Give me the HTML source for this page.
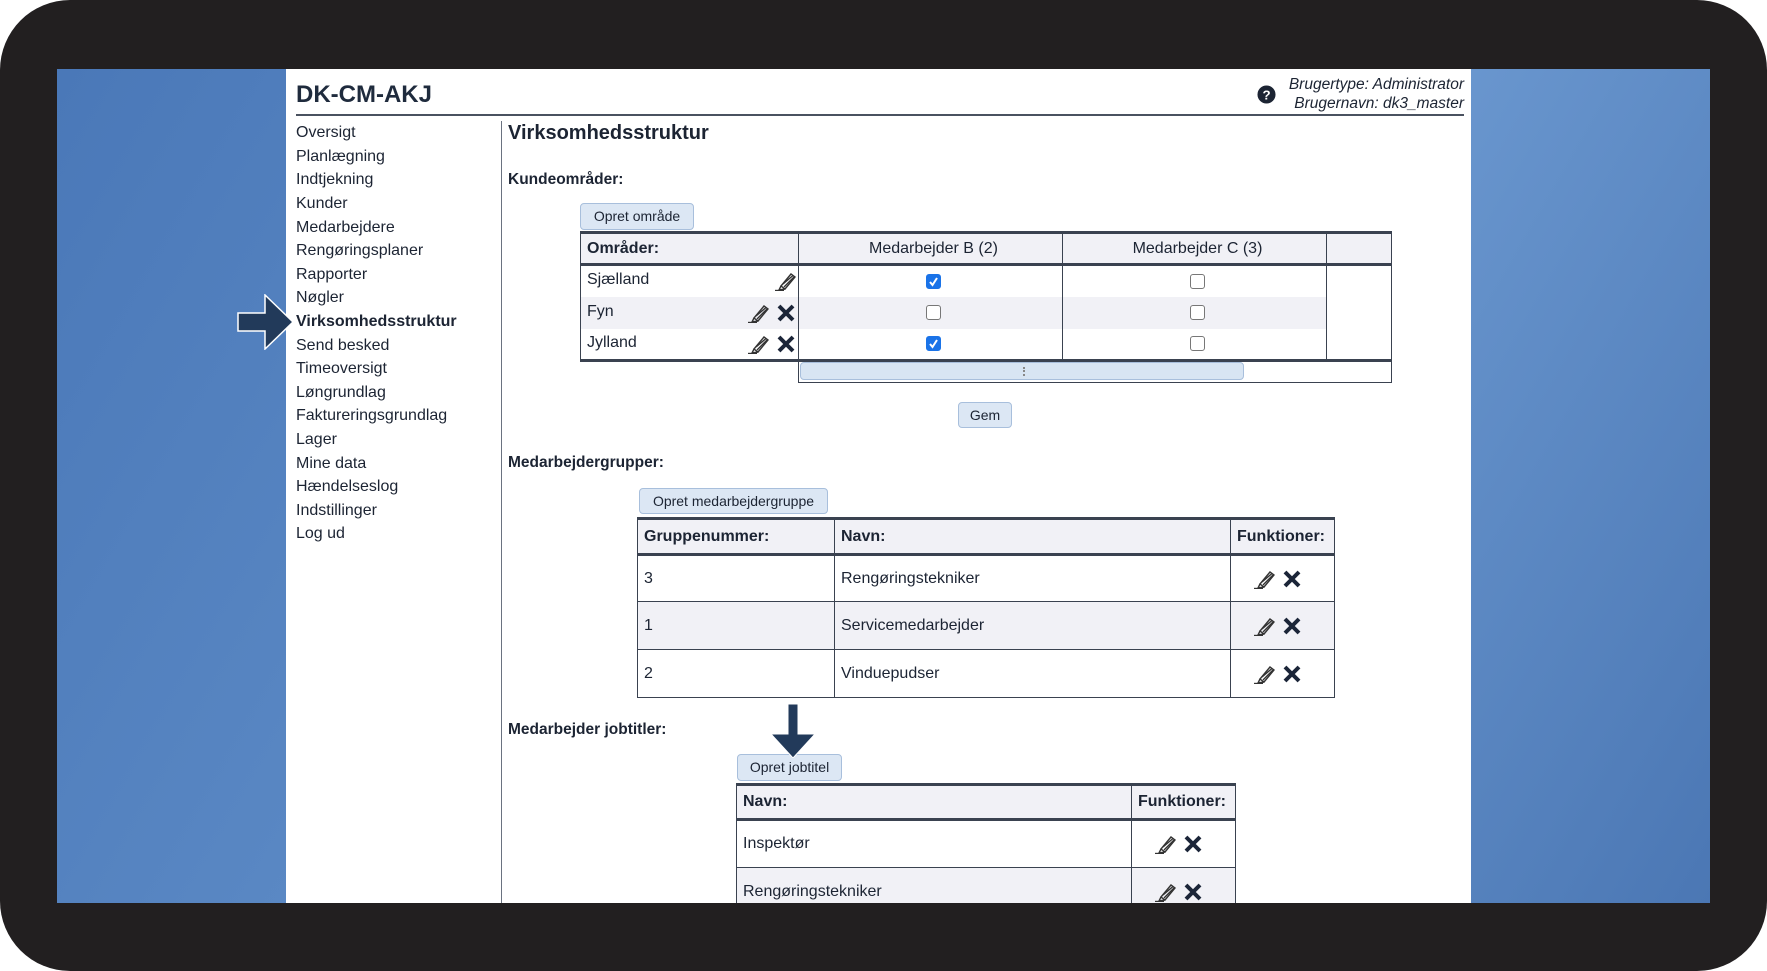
<!DOCTYPE html>
<html><head><meta charset="utf-8">
<style>
*{margin:0;padding:0;box-sizing:border-box}
body{width:1767px;height:971px;background:#fff;overflow:hidden;font-family:"Liberation Sans",Arial,sans-serif;color:#1c2433;position:relative}
.frame{position:absolute;left:0;top:0;width:1767px;height:971px;background:#221f20;border-radius:70px}
.blue{position:absolute;left:57px;top:69px;width:1653px;height:834px;background:linear-gradient(120deg,#4a78b8 0%,#5d8bc6 40%,#6a97cf 65%,#4b77b4 100%)}
.page{position:absolute;left:286px;top:69px;width:1185px;height:834px;background:#fff;overflow:hidden}
.a{position:absolute;white-space:nowrap}
.nav div{position:absolute;left:10px;font-size:16px;white-space:nowrap}
.btn{position:absolute;background:#dce7f4;border:1px solid #a8bfdc;border-radius:4px;font-size:14px;text-align:center;color:#1c2433}
table{position:absolute;border-collapse:collapse;font-size:16px}
td,th{border:1.5px solid #3a4250;}
th{background:#f1f1f6;text-align:left;font-weight:bold;padding-left:6px;border-bottom:3px solid #3a4250}
td{padding-left:6px}
.g td{background:#f1f1f6}
.ic{display:inline-block;vertical-align:middle}
.cb{display:inline-block;width:15px;height:15px;border:1.5px solid #777;border-radius:3px;background:#fff;vertical-align:middle}
.cb.on{background:#1a73e8;border-color:#1a73e8;position:relative}
</style></head><body>
<div class="frame"></div>
<div class="blue"></div>
<div class="page">
  <div class="a" style="left:10px;top:12px;font-size:24px;font-weight:bold;color:#1f2b3d">DK-CM-AKJ</div>
  <div class="a" style="right:7px;top:6px;font-size:15.5px;font-style:italic;text-align:right;line-height:19px">Brugertype: Administrator<br>Brugernavn: dk3_master</div>
  <svg class="a" style="left:971px;top:16px" width="19" height="19" viewBox="0 0 20 20"><circle cx="10" cy="10" r="9.5" fill="#1c2433"/><text x="10" y="15" text-anchor="middle" font-family="Liberation Sans" font-weight="bold" font-size="14" fill="#fff">?</text></svg>
  <div class="a" style="left:10px;top:45px;width:1168px;height:2px;background:#4a5260"></div>
  <div class="a" style="left:215px;top:52px;width:1px;height:800px;background:#6a7280"></div>
  <div class="nav">
    <div style="top:55px">Oversigt</div>
    <div style="top:79px">Planlægning</div>
    <div style="top:102px">Indtjekning</div>
    <div style="top:126px">Kunder</div>
    <div style="top:150px">Medarbejdere</div>
    <div style="top:173px">Rengøringsplaner</div>
    <div style="top:197px">Rapporter</div>
    <div style="top:220px">Nøgler</div>
    <div style="top:244px;font-weight:bold">Virksomhedsstruktur</div>
    <div style="top:268px">Send besked</div>
    <div style="top:291px">Timeoversigt</div>
    <div style="top:315px">Løngrundlag</div>
    <div style="top:338px">Faktureringsgrundlag</div>
    <div style="top:362px">Lager</div>
    <div style="top:386px">Mine data</div>
    <div style="top:409px">Hændelseslog</div>
    <div style="top:433px">Indstillinger</div>
    <div style="top:456px">Log ud</div>
  </div>
  <div class="a" style="left:222px;top:53px;font-size:20px;font-weight:bold">Virksomhedsstruktur</div>
  <div class="a" style="left:222px;top:102px;font-size:15.5px;font-weight:bold">Kundeområder:</div>
  <div class="btn" style="left:294px;top:134px;width:114px;height:27px;line-height:25px">Opret område</div>

  <table style="left:294px;top:162px;width:812px;border-top:3px solid #3a4250">
    <tr style="height:32px"><th style="width:218px">Områder:</th><th style="width:264px;text-align:center;font-weight:normal">Medarbejder B (2)</th><th style="width:264px;text-align:center;font-weight:normal">Medarbejder C (3)</th><th></th></tr>
    <tr style="height:32px"><td style="border-bottom:none;border-top:none">Sjælland<span style="float:right;margin-right:2px"><svg class="ic" width="22" height="20" viewBox="0 0 22 20"><g fill="none" stroke="#333" stroke-width="1.4"><path d="M7 15 L17 3 L21 6 L11 18 Z"/><path d="M9 13 L19 4.5 M10 16 L20 6"/><path d="M7 15 L5 19 L11 18"/><path d="M1 19.5 H10"/></g></svg></span></td><td style="text-align:center;border-top:none;border-bottom:none"><span class="cb on"><svg width="13" height="13" viewBox="0 0 13 13" style="position:absolute;left:0;top:0"><path d="M3 7 L5.5 10 L10 3" stroke="#fff" stroke-width="2" fill="none"/></svg></span></td><td style="text-align:center;border-top:none;border-bottom:none"><span class="cb"></span></td><td style="border-top:none;border-bottom:none"></td></tr>
    <tr class="g" style="height:32px"><td style="border-bottom:none;border-top:none">Fyn<span style="float:right;margin-right:2px"><svg class="ic" width="22" height="20" viewBox="0 0 22 20"><g fill="none" stroke="#333" stroke-width="1.4"><path d="M7 15 L17 3 L21 6 L11 18 Z"/><path d="M9 13 L19 4.5 M10 16 L20 6"/><path d="M7 15 L5 19 L11 18"/><path d="M1 19.5 H10"/></g></svg><svg class="ic" style="margin-left:7px" width="20" height="20" viewBox="0 0 20 20"><path d="M3 3 L17 17 M17 3 L3 17" stroke="#1b2538" stroke-width="4"/></svg></span></td><td style="text-align:center;border-top:none;border-bottom:none"><span class="cb"></span></td><td style="text-align:center;border-top:none;border-bottom:none"><span class="cb"></span></td><td style="border-top:none;border-bottom:none;background:#fff"></td></tr>
    <tr style="height:32px"><td style="border-top:none;border-bottom:3px solid #3a4250">Jylland<span style="float:right;margin-right:2px"><svg class="ic" width="22" height="20" viewBox="0 0 22 20"><g fill="none" stroke="#333" stroke-width="1.4"><path d="M7 15 L17 3 L21 6 L11 18 Z"/><path d="M9 13 L19 4.5 M10 16 L20 6"/><path d="M7 15 L5 19 L11 18"/><path d="M1 19.5 H10"/></g></svg><svg class="ic" style="margin-left:7px" width="20" height="20" viewBox="0 0 20 20"><path d="M3 3 L17 17 M17 3 L3 17" stroke="#1b2538" stroke-width="4"/></svg></span></td><td style="text-align:center;border-top:none;border-bottom:3px solid #3a4250"><span class="cb on"><svg width="13" height="13" viewBox="0 0 13 13" style="position:absolute;left:0;top:0"><path d="M3 7 L5.5 10 L10 3" stroke="#fff" stroke-width="2" fill="none"/></svg></span></td><td style="text-align:center;border-top:none;border-bottom:3px solid #3a4250"><span class="cb"></span></td><td style="border-top:none;border-bottom:3px solid #3a4250"></td></tr>
  </table>
  <div class="a" style="left:512px;top:291px;width:594px;height:23px;border:1.5px solid #3a4250;border-top:none"></div>
  <div class="a" style="left:514px;top:293px;width:444px;height:18px;background:#d8e5f3;border:1px solid #a8bfdc;border-radius:4px"><div style="position:absolute;left:222px;top:4px;width:2px;height:9px;border-left:2px dotted #888"></div></div>
  <div class="btn" style="left:672px;top:333px;width:54px;height:26px;line-height:24px">Gem</div>

  <div class="a" style="left:222px;top:385px;font-size:15.5px;font-weight:bold">Medarbejdergrupper:</div>
  <div class="btn" style="left:353px;top:419px;width:189px;height:26px;line-height:24px">Opret medarbejdergruppe</div>
  <table style="left:351px;top:448px;width:698px;border-top:3px solid #3a4250">
    <tr style="height:36px"><th style="width:197px">Gruppenummer:</th><th style="width:396px">Navn:</th><th>Funktioner:</th></tr>
    <tr style="height:47px"><td>3</td><td>Rengøringstekniker</td><td style="padding-left:22px"><svg class="ic" width="22" height="20" viewBox="0 0 22 20"><g fill="none" stroke="#333" stroke-width="1.4"><path d="M7 15 L17 3 L21 6 L11 18 Z"/><path d="M9 13 L19 4.5 M10 16 L20 6"/><path d="M7 15 L5 19 L11 18"/><path d="M1 19.5 H10"/></g></svg><svg class="ic" style="margin-left:7px" width="20" height="20" viewBox="0 0 20 20"><path d="M3 3 L17 17 M17 3 L3 17" stroke="#1b2538" stroke-width="4"/></svg></td></tr>
    <tr class="g" style="height:48px"><td>1</td><td>Servicemedarbejder</td><td style="padding-left:22px"><svg class="ic" width="22" height="20" viewBox="0 0 22 20"><g fill="none" stroke="#333" stroke-width="1.4"><path d="M7 15 L17 3 L21 6 L11 18 Z"/><path d="M9 13 L19 4.5 M10 16 L20 6"/><path d="M7 15 L5 19 L11 18"/><path d="M1 19.5 H10"/></g></svg><svg class="ic" style="margin-left:7px" width="20" height="20" viewBox="0 0 20 20"><path d="M3 3 L17 17 M17 3 L3 17" stroke="#1b2538" stroke-width="4"/></svg></td></tr>
    <tr style="height:48px"><td>2</td><td>Vinduepudser</td><td style="padding-left:22px"><svg class="ic" width="22" height="20" viewBox="0 0 22 20"><g fill="none" stroke="#333" stroke-width="1.4"><path d="M7 15 L17 3 L21 6 L11 18 Z"/><path d="M9 13 L19 4.5 M10 16 L20 6"/><path d="M7 15 L5 19 L11 18"/><path d="M1 19.5 H10"/></g></svg><svg class="ic" style="margin-left:7px" width="20" height="20" viewBox="0 0 20 20"><path d="M3 3 L17 17 M17 3 L3 17" stroke="#1b2538" stroke-width="4"/></svg></td></tr>
  </table>

  <div class="a" style="left:222px;top:652px;font-size:15.5px;font-weight:bold">Medarbejder jobtitler:</div>
  <div class="btn" style="left:451px;top:685px;width:105px;height:27px;line-height:25px">Opret jobtitel</div>
  <svg class="a" style="left:482px;top:635px" width="50" height="54" viewBox="0 0 50 54"><path d="M20 0 H30 V30 H47 L25 54 L3 30 H20 Z" fill="#223a5a" stroke="#fff" stroke-width="1"/></svg>
  <table style="left:450px;top:714px;width:500px;border-top:3px solid #3a4250">
    <tr style="height:35px"><th style="width:395px">Navn:</th><th>Funktioner:</th></tr>
    <tr style="height:48px"><td>Inspektør</td><td style="padding-left:22px"><svg class="ic" width="22" height="20" viewBox="0 0 22 20"><g fill="none" stroke="#333" stroke-width="1.4"><path d="M7 15 L17 3 L21 6 L11 18 Z"/><path d="M9 13 L19 4.5 M10 16 L20 6"/><path d="M7 15 L5 19 L11 18"/><path d="M1 19.5 H10"/></g></svg><svg class="ic" style="margin-left:7px" width="20" height="20" viewBox="0 0 20 20"><path d="M3 3 L17 17 M17 3 L3 17" stroke="#1b2538" stroke-width="4"/></svg></td></tr>
    <tr class="g" style="height:48px"><td>Rengøringstekniker</td><td style="padding-left:22px"><svg class="ic" width="22" height="20" viewBox="0 0 22 20"><g fill="none" stroke="#333" stroke-width="1.4"><path d="M7 15 L17 3 L21 6 L11 18 Z"/><path d="M9 13 L19 4.5 M10 16 L20 6"/><path d="M7 15 L5 19 L11 18"/><path d="M1 19.5 H10"/></g></svg><svg class="ic" style="margin-left:7px" width="20" height="20" viewBox="0 0 20 20"><path d="M3 3 L17 17 M17 3 L3 17" stroke="#1b2538" stroke-width="4"/></svg></td></tr>
  </table>
</div>
<svg style="position:absolute;left:237px;top:294px" width="60" height="56" viewBox="0 0 60 56"><path d="M1 19 H28 V1 L56 28 L28 55 V37 H1 Z" fill="#223a5a" stroke="#fff" stroke-width="1.5"/></svg>
</body></html>
